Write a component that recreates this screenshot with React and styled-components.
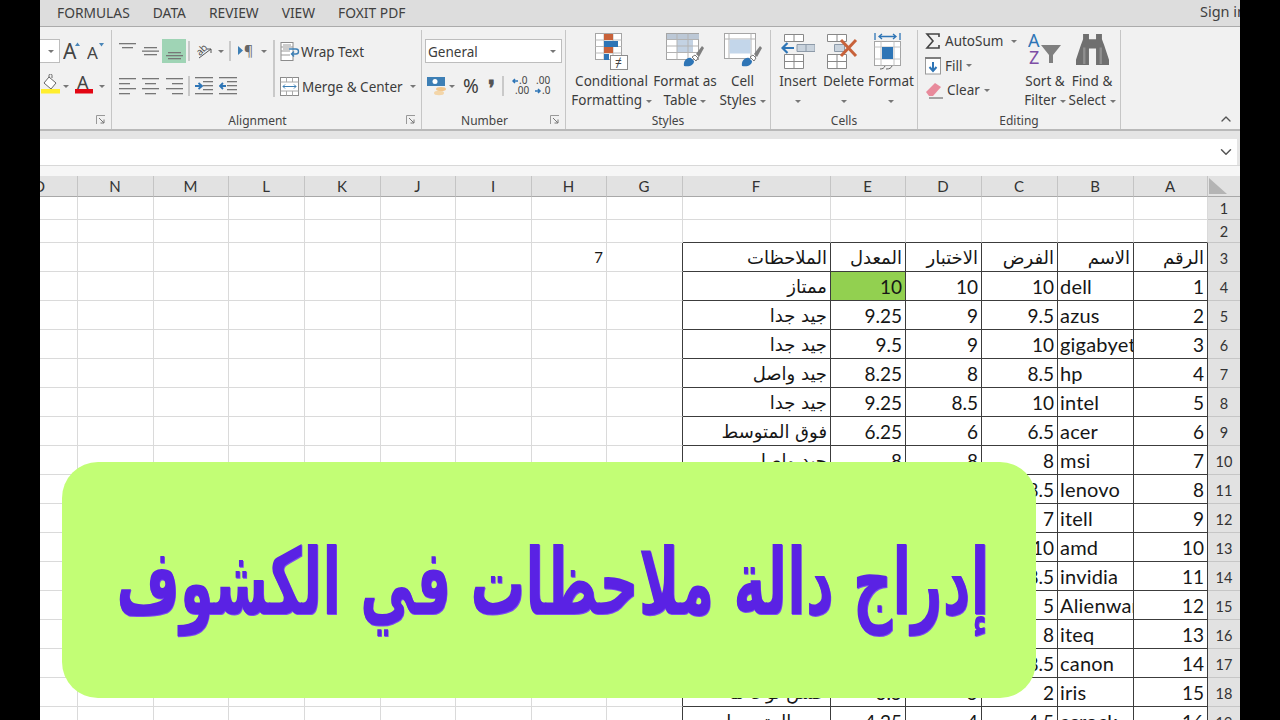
import React from "react";
import styled, { createGlobalStyle } from "styled-components";
import { ChevronUp, ChevronDown } from "lucide-react";

const Global = createGlobalStyle`
  html, body { margin: 0; padding: 0; background: #000; width: 1280px; height: 720px; overflow: hidden; }
  * { box-sizing: border-box; }
`;

const Frame = styled.div`
  width: 1280px; height: 720px; background: #000; padding: 0 40px;
  font-family: "Noto Sans", "Open Sans", sans-serif; color: #3c3c3c;
`;
const Main = styled.div`
  position: relative; width: 1200px; height: 720px; overflow: hidden; background: #f3f3f3;
  display: flex; flex-direction: column;
`;
const TabBar = styled.div`
  height: 27px; flex: none; background: #dddddd; border-bottom: 1px solid #ababab;
  display: flex; align-items: center; padding: 0 0 2px 17px; gap: 23px; font-size: 13.8px; color: #404040;
`;
const Tab = styled.span`white-space: nowrap;`;
const SignIn = styled.span`margin-left: auto; margin-right: -6px; font-size: 14.5px; white-space: nowrap; position: relative; top: -1px;`;

const Ribbon = styled.div`
  height: 104px; flex: none; background: #f1f1f1; border-bottom: 2px solid #b9b9b9; display: flex;
`;
const Group = styled.div`
  position: relative; width: ${p => p.$w}px; flex: none; display: flex; flex-direction: column;
  margin-top: 3px; border-right: 1.5px solid #c6c6c6;
`;
const GroupBody = styled.div`
  flex: 1; display: flex; padding-left: ${p => p.$pl || 0}px; min-height: 0;
`;
const GroupLabel = styled.div`
  height: 16px; flex: none; text-align: center; font-size: 12px; line-height: 16px; color: #444;
  padding-right: ${p => p.$shift || 0}px;
`;
const Launcher = styled.svg`position: absolute; right: 5px; bottom: 4px;`;
const CollapseSpace = styled.div`
  flex: 1; display: flex; justify-content: flex-end; align-items: flex-end; padding: 0 6px 2px 0; color: #555;
`;
const Stack = styled.div`display: flex; flex-direction: column; gap: 11px; padding-top: 9px;`;
const Row = styled.div`display: flex; align-items: center; height: 24px;`;
const Slot = styled.div`
  width: ${p => p.$w}px; height: 24px; flex: none; display: flex; align-items: center; justify-content: center;
  background: ${p => (p.$on ? "#9fd4b5" : "transparent")};
`;
const Tiny = styled.div`width: 1.5px; height: 20px; background: #c9c9c9;`;
const TallSep = styled.div`width: 2px; height: 57px; background: #c9c9c9; margin: 10px 5px 0 3px; flex: none;`;
const Caret = styled.span`
  display: inline-block; width: 0; height: 0; border-left: 3px solid transparent; border-right: 3px solid transparent;
  border-top: 3px solid #777; margin-left: ${p => p.$ml || 0}px; vertical-align: middle; flex: none;
`;
const Label = styled.span`font-size: 13.5px; white-space: nowrap; margin-left: ${p => p.$ml || 0}px; color: #3c3c3c; padding-top: 1px;`;
const SelectBox = styled.div`
  width: ${p => p.$w}px; height: 24px; background: #fff; border: 1px solid #bdbdbd; display: flex; align-items: center;
  justify-content: space-between; padding: 1px 5px 0 2px; font-size: 13.5px; flex: none;
`;
const FontBox = styled(SelectBox)`border-left: 0; justify-content: flex-end; padding-top: 0;`;
const Big = styled.div`
  width: ${p => p.$w}px; flex: none; display: flex; flex-direction: column; align-items: center; padding-top: 3px;
  font-size: 13.5px; line-height: 19px; white-space: nowrap; color: #3c3c3c;
`;
const BigIcon = styled.div`height: 39px; flex: none; display: flex; align-items: flex-start; justify-content: center;`;
const EditCol = styled.div`width: 104px; flex: none; padding: 0 0 0 7px; margin-top: -1px; display: flex; flex-direction: column;`;
const EditRow = styled.div`height: 24.5px; display: flex; align-items: center; gap: 4px; font-size: 13.5px;`;
const Percent = styled.span`font-size: 19px; color: #3c3c3c;`;
const Comma = styled.span`font-size: 22px; font-weight: 700; color: #555; font-family: "Liberation Serif", serif; position: relative; top: 3px;`;

const FormulaArea = styled.div`
  height: 45px; flex: none; background: #f6f6f6; display: flex; flex-direction: column;
`;
const FormulaBand = styled.div`
  height: 35px; flex: none; background: #e5e5e5; padding-top: 8px; padding-bottom: 1px; border-bottom: 1px solid #d8d8d8;
`;
const FormulaInput = styled.div`
  height: 26px; background: #fff; margin-right: 3px; display: flex; align-items: center; justify-content: flex-end;
  padding-right: 2px; color: #555;
`;

const Sheet = styled.div`
  flex: none; margin-left: -38px; display: grid;
  grid-template-columns: 76px 76px 75px 76px 76px 75px 76px 75px 76px 148px 75px 76px 76px 76px 74px 33px;
  grid-template-rows: 21px 23px 23px repeat(17, 29px);
  font-family: Lato, "Open Sans", "DejaVu Sans", sans-serif; color: #1f1f1f; background: #fff;
`;
const ColHead = styled.div`
  background: #e2e2e2; border-right: 1px solid #c4c4c4; border-bottom: 1.5px solid #a8a8a8; padding-right: 1px;
  display: flex; align-items: center; justify-content: center; font-size: 15px; color: #333;
`;
const Corner = styled.div`
  background: #e2e2e2; border-bottom: 1.5px solid #a8a8a8; position: relative;
  &::after { content: ""; position: absolute; left: 1px; top: 2px; width: 18px; height: 16px; background: #b4b4b4; clip-path: polygon(0 0, 100% 100%, 0 100%); }
`;
const RowHead = styled.div`
  background: #e2e2e2; border-bottom: 1px solid #c6c6c6; display: flex; align-items: center; justify-content: center;
  font-size: 14.5px; color: #333; padding: ${p => (p.$small ? 0 : 3)}px 1px 0 0;
`;
const Cell = styled.div`
  background: ${p => p.$fill || "#fff"};
  border-right: ${p => (p.$edgeR ? "1.5px solid #3c3c3c" : "1px solid #dadada")};
  border-bottom: ${p => (p.$edgeB ? "1.5px solid #3c3c3c" : "1px solid #dadada")};
  display: flex; align-items: center; overflow: hidden; white-space: nowrap;
  justify-content: ${p => (p.$left ? "flex-start" : "flex-end")};
  padding: ${p => (p.$ar ? "1px" : "0")} 3px 0 ${p => (p.$left ? 2 : 3)}px; color: #161616;
  font-size: ${p => (p.$ar ? 18 : p.$small ? 15 : p.$left ? 20 : 19)}px;
  letter-spacing: ${p => (p.$left ? 0.2 : 0)}px;
  font-family: ${p => (p.$ar ? '"DejaVu Sans", sans-serif' : 'Lato, "Open Sans", sans-serif')};
`;

const Banner = styled.div`
  position: absolute; left: 22px; top: 462px; width: 974px; height: 236px; border-radius: 36px; background: #c2fe75;
  display: flex; align-items: center; justify-content: center; padding: 4px 0 0 8px; overflow: hidden;
`;
const BannerText = styled.div`
  direction: rtl; font-family: "DejaVu Sans", sans-serif; font-weight: 700; font-size: 92px; color: #5a22e4;
  white-space: nowrap; text-shadow: 1px 1px 0 #7b4cf0; transform: scaleX(0.595); flex: none;
`;

/* ---------- icons ---------- */
const Lines = ({ rows, w = 17, h = 17 }) => (
  <svg width={w} height={h} viewBox={`0 0 ${w} ${h}`}>
    {rows.map(([y, a, b], i) => <rect key={i} x={a} y={y} width={b - a} height={1.3} fill="#777" />)}
  </svg>
);
const Launch = () => (
  <Launcher width="10" height="10" viewBox="0 0 10 10">
    <path d="M.5 9V.5H9" fill="none" stroke="#999" />
    <path d="M3 3l5 5M8 4.500V8H4.500" fill="none" stroke="#777" />
  </Launcher>
);
const GrowA = ({ size, up }) => (
  <svg width="18" height="20" viewBox="0 0 18 20">
    <text x="0" y="18" fontSize={size} fontFamily="Noto Sans" fill="#444">A</text>
    <path d={up ? "M12 5l2.500-3.500L17 5z" : "M12 2l2.500 3.500L17 2z"} fill="#4a86b8" />
  </svg>
);
const Bucket = () => (
  <svg width="20" height="24" viewBox="0 0 20 24">
    <path d="M8 3l7 6-5 6-7-6z" fill="#fff" stroke="#666" />
    <path d="M8 3V1.500a1.500 1.500 0 0 1 3 0V4" fill="none" stroke="#666" />
    <rect x="0" y="15" width="19" height="4.500" fill="#ffee2e" />
  </svg>
);
const ColorA = () => (
  <svg width="20" height="24" viewBox="0 0 20 24">
    <text x="3" y="15" fontSize="18" fontFamily="Noto Sans" fill="#444">A</text>
    <rect x="1" y="15" width="18" height="4.500" fill="#e30613" />
  </svg>
);
const Orient = () => (
  <svg width="18" height="18" viewBox="0 0 18 18">
    <text x="1" y="11" fontSize="10" fontFamily="Noto Sans" fill="#555" transform="rotate(-45 7 8)">ab</text>
    <path d="M4 16L16 7M12 7h4v4" fill="none" stroke="#555" />
  </svg>
);
const Rtl = () => (
  <svg width="18" height="14" viewBox="0 0 18 14">
    <path d="M1 2l5 4.500L1 11z" fill="#3d7fb5" />
    <text x="7" y="12" fontSize="14" fontFamily="Noto Sans" fill="#666">¶</text>
  </svg>
);
const Indent = ({ out }) => (
  <svg width="18" height="18" viewBox="0 0 18 18">
    {[1, 5, 9, 13, 17].map(y => <rect key={y} x={y === 1 || y === 17 ? 0 : 8} y={y - 1} width={y === 1 || y === 17 ? 18 : 10} height="1.3" fill="#777" />)}
    <path d={out ? "M7 9H1M4 6L1 9l3 3" : "M0 9h6M3.500 6L7 9l-3.500 3"} fill="none" stroke="#2e75b6" strokeWidth="1.800" />
  </svg>
);
const Wrap = () => (
  <svg width="20" height="19" viewBox="0 0 20 19">
    <rect x="1" y=".5" width="12" height="18" fill="#fff" stroke="#8c8c8c" />
    <path d="M1 5h12M1 9h9M1 13h9M3 3h8M3 7h6" stroke="#999" />
    <path d="M9 7h7a2 2 0 0 1 0 5h-4M14 9.500L11.500 12l2.500 2.500" fill="none" stroke="#3d7fb5" strokeWidth="1.400" />
  </svg>
);
const Merge = () => (
  <svg width="19" height="19" viewBox="0 0 19 19">
    <rect x=".5" y=".5" width="18" height="18" fill="#fff" stroke="#8c8c8c" />
    <path d="M.5 5h18M.5 14h18M6.500.5V5M12.500.5V5M6.500 14v4.500M12.500 14v4.500" stroke="#aaa" />
    <path d="M3 9.500h13M5 7.500l-2 2 2 2M14 7.500l2 2-2 2" fill="none" stroke="#3d7fb5" />
  </svg>
);
const Money = () => (
  <svg width="20" height="20" viewBox="0 0 20 20">
    <rect x="0" y="1" width="18" height="9" fill="#3d7fb5" />
    <circle cx="8" cy="5.500" r="2.500" fill="#fff" />
    <ellipse cx="14" cy="13" rx="5" ry="2" fill="#f1c68c" />
    <ellipse cx="12" cy="17" rx="5" ry="2.200" fill="#f3d5a8" />
  </svg>
);
const Dec = ({ more }) => (
  <svg width="20" height="20" viewBox="0 0 20 20" fontFamily="Noto Sans" fontSize="10" fill="#444">
    {more ? (
      <>
        <text x="7" y="8">.0</text><text x="3" y="18">.00</text>
        <path d="M6 5H1M3 3L1 5l2 2" fill="none" stroke="#2e75b6" strokeWidth="1.500" />
      </>
    ) : (
      <>
        <text x="3" y="8">.00</text><text x="9" y="18">.0</text>
        <path d="M2 15h5M5 13l2 2-2 2" fill="none" stroke="#2e75b6" strokeWidth="1.500" />
      </>
    )}
  </svg>
);
const Conditional = () => (
  <svg width="34" height="38" viewBox="0 0 34 38">
    <rect x=".5" y=".5" width="26" height="26" fill="#fff" stroke="#a5a5a5" />
    <path d="M.5 7h26M.5 13.500h26M.5 20h26M9 .5v26M18 .5v26" stroke="#bbb" />
    <rect x="9" y="1" width="9" height="6" fill="#c8623a" />
    <rect x="9" y="8" width="14" height="6" fill="#2e75b6" />
    <rect x="9" y="14" width="9" height="6" fill="#c8623a" />
    <rect x="9" y="21" width="5" height="6" fill="#2e75b6" />
    <rect x="15.500" y="22.500" width="17" height="14" fill="#fff" stroke="#8c8c8c" />
    <text x="20" y="34" fontSize="12" fontFamily="Noto Sans" fill="#444">≠</text>
  </svg>
);
const Brush = () => (
  <g>
    <path d="M18 33c-1-5 3-9 7-8l3 3c0 4-4 6-10 5z" fill="#2e75b6" />
    <path d="M26 24l3-2 3 3-2 3z" fill="#fff" stroke="#777" />
    <path d="M30 21l6-8 2 2-5 9z" fill="#7f7f7f" />
  </g>
);
const FormatTable = () => (
  <svg width="38" height="36" viewBox="0 0 38 36">
    <rect x=".5" y=".5" width="32" height="26" fill="#fff" stroke="#a5a5a5" />
    <rect x="1" y="1" width="32" height="5" fill="#bcc8d6" />
    <rect x="11" y="6" width="16" height="13" fill="#c3d2e3" />
    <path d="M.5 6.500h32M.5 13h32M.5 19.500h32M11 .5v26M22 .5v26" stroke="#b3b3b3" />
    <Brush />
  </svg>
);
const CellStyles = () => (
  <svg width="38" height="36" viewBox="0 0 38 36">
    <rect x=".5" y=".5" width="31" height="25" fill="#fff" stroke="#a5a5a5" />
    <path d="M.5 6h31M5 .5v25M27 .5v25" stroke="#b3b3b3" />
    <rect x="5.500" y="6.500" width="21" height="14" fill="#c3d6ea" />
    <Brush />
  </svg>
);
const Insert = () => (
  <svg width="34" height="36" viewBox="0 0 34 36">
    <path d="M3.500 1.500h19v7h-19zM13 1.500v7" fill="#fff" stroke="#888" />
    <path d="M3.500 22.500h19v14h-19zM3.500 29.500h19M13 22.500v14" fill="#fff" stroke="#888" transform="translate(0 -1)" />
    <path d="M16 11.500h18v7H16zM25 11.500v7" fill="#c9d3dd" stroke="#8d9aa8" />
    <path d="M13 15H2M6.500 10L1.500 15l5 5" fill="none" stroke="#2e75b6" strokeWidth="2.200" />
  </svg>
);
const DeleteIcon = () => (
  <svg width="36" height="36" viewBox="0 0 36 36">
    <path d="M1.500 1.500h19v7h-19zM11 1.500v7" fill="#fff" stroke="#888" />
    <path d="M1.500 21.500h19v14h-19zM1.500 28.500h19M11 21.500v14" fill="#fff" stroke="#888" />
    <path d="M8.500 11.500h10v7h-10z" fill="#c9d3dd" stroke="#8d9aa8" />
    <path d="M15 7l15 16M30 7L15 23" stroke="#c8623a" strokeWidth="3" />
  </svg>
);
const FormatIcon = () => (
  <svg width="34" height="38" viewBox="0 0 34 38">
    <path d="M1 0v7M26 0v7M5 3.500h17M8 1L5 3.500 8 6M19 1l3 2.500L19 6" fill="none" stroke="#2e75b6" strokeWidth="1.300" />
    <rect x=".5" y="8.500" width="26" height="24" fill="#fff" stroke="#a5a5a5" />
    <path d="M.5 14h26M.5 26h26M7 8.500v24M20 8.500v24" stroke="#c2c2c2" />
    <rect x="8" y="14" width="11" height="12" fill="#2e75b6" />
    <path d="M6 36c3 0 4-1 5-3M12 36c4 0 5-1 6-3" fill="none" stroke="#666" />
  </svg>
);
const Sigma = () => (
  <svg width="16" height="16" viewBox="0 0 16 16">
    <path d="M14 4V1H2l6 7-6 7h12v-3" fill="none" stroke="#444" strokeWidth="1.600" />
  </svg>
);
const FillIcon = () => (
  <svg width="16" height="18" viewBox="0 0 16 18">
    <rect x=".5" y="1" width="15" height="16" fill="#fff" stroke="#9a9a9a" />
    <rect x="0" y="0" width="16" height="2" fill="#7f7f7f" />
    <path d="M8 5v9M4.500 10L8 14l3.500-4" fill="none" stroke="#2e75b6" strokeWidth="2" />
  </svg>
);
const Eraser = () => (
  <svg width="18" height="17" viewBox="0 0 18 17">
    <path d="M1 10l9-9 6 4-8 9H4z" fill="#e88a9b" />
    <path d="M4 16h14" stroke="#555" />
  </svg>
);
const SortIcon = () => (
  <svg width="34" height="34" viewBox="0 0 34 34">
    <text x="0" y="14" fontSize="18" fontFamily="Noto Sans" fill="#2e75b6">A</text>
    <text x="1" y="31" fontSize="18" fontFamily="Noto Sans" fill="#7d4ea5">Z</text>
    <path d="M13 12h20l-8 10v8h-4v-8z" fill="#7f7f7f" />
  </svg>
);
const Binoculars = () => (
  <svg width="33" height="33" viewBox="0 0 28 32" preserveAspectRatio="none">
    <path d="M6 1h5v5h6V1h5v5l2 6 4 14v5H17V15h-6v16H0v-5l4-14 2-6z" fill="#6f6f6f" />
    <path d="M7 14v16M21 14v16" stroke="#8f8f8f" strokeWidth="2" />
  </svg>
);

/* ---------- sheet data ---------- */
const colNames = ["O", "N", "M", "L", "K", "J", "I", "H", "G", "F", "E", "D", "C", "B", "A"];
const FIRST = 9; // index of column F
const rows = [
  ["الملاحظات", "المعدل", "الاختبار", "الفرض", "الاسم", "الرقم"],
  ["ممتاز", "10", "10", "10", "dell", "1"],
  ["جيد جدا", "9.25", "9", "9.5", "azus", "2"],
  ["جيد جدا", "9.5", "9", "10", "gigabyet", "3"],
  ["جيد واصل", "8.25", "8", "8.5", "hp", "4"],
  ["جيد جدا", "9.25", "8.5", "10", "intel", "5"],
  ["فوق المتوسط", "6.25", "6", "6.5", "acer", "6"],
  ["جيد واصل", "8", "8", "8", "msi", "7"],
  ["", "", "", "8.5", "lenovo", "8"],
  ["", "", "", "7", "itell", "9"],
  ["", "", "", "10", "amd", "10"],
  ["", "", "", "8.5", "invidia", "11"],
  ["", "", "", "5", "Alienware", "12"],
  ["", "", "", "8", "iteq", "13"],
  ["", "", "", "8.5", "canon", "14"],
  ["حسن نوعا ما", "3.5", "5", "2", "iris", "15"],
  ["دون المتوسط", "4.25", "4", "4.5", "asrock", "16"],
];

const SheetGrid = () => {
  const cells = [];
  colNames.forEach(c => cells.push(<ColHead key={c}>{c}</ColHead>));
  cells.push(<Corner key="corner" />);
  for (let r = 1; r <= 19; r++) {
    colNames.forEach((c, i) => {
      const data = r >= 3 && i >= FIRST ? rows[r - 3][i - FIRST] : "";
      const inTable = i >= FIRST;
      const arabic = /[\u0600-\u06ff]/.test(data);
      const isSeven = r === 3 && c === "H";
      cells.push(
        <Cell
          key={c + r}
          $ar={arabic}
          $small={isSeven}
          $left={c === "B" && r > 3}
          $fill={c === "E" && r === 4 ? "#92d050" : undefined}
          $edgeR={r >= 3 && (inTable || c === "G")}
          $edgeB={inTable && r >= 2}
        >
          {isSeven ? "7" : data}
        </Cell>
      );
    });
    cells.push(<RowHead key={"r" + r} $small={r < 3}>{r}</RowHead>);
  }
  return <Sheet>{cells}</Sheet>;
};

export default function App() {
  return (
    <Frame>
      <Global />
      <Main>
        <TabBar>
          <Tab>FORMULAS</Tab><Tab>DATA</Tab><Tab>REVIEW</Tab><Tab>VIEW</Tab><Tab>FOXIT PDF</Tab>
          <SignIn>Sign in</SignIn>
        </TabBar>
        <Ribbon>
          <Group $w={72}>
            <GroupBody>
              <Stack>
                <Row>
                  <FontBox $w={20}><Caret /></FontBox>
                  <Slot $w={24}><GrowA size={21} up /></Slot>
                  <Slot $w={24}><GrowA size={17} /></Slot>
                </Row>
                <Row>
                  <Slot $w={21}><Bucket /></Slot><Caret $ml={2} />
                  <Slot $w={30}><ColorA /></Slot><Caret />
                </Row>
              </Stack>
            </GroupBody>
            <GroupLabel>&nbsp;</GroupLabel>
            <Launch />
          </Group>

          <Group $w={310}>
            <GroupBody $pl={4}>
              <Stack>
                <Row>
                  <Slot $w={23}><Lines rows={[[0, 0, 17], [4, 3, 14]]} /></Slot>
                  <Slot $w={23}><Lines rows={[[4, 2, 15], [7.500, 0, 17], [11, 2, 15]]} /></Slot>
                  <Slot $on $w={24}><Lines rows={[[9, 2, 15], [12, 0, 17], [15, 2, 15]]} /></Slot>
                  <Slot $w={6}><Tiny /></Slot>
                  <Slot $w={24}><Orient /></Slot>
                  <Slot $w={10}><Caret /></Slot>
                  <Slot $w={8}><Tiny /></Slot>
                  <Slot $w={24}><Rtl /></Slot>
                  <Slot $w={12}><Caret /></Slot>
                </Row>
                <Row>
                  <Slot $w={23}><Lines h={18} rows={[[1, 0, 17], [6, 0, 11], [11, 0, 17], [16, 0, 11]]} /></Slot>
                  <Slot $w={23}><Lines h={18} rows={[[1, 0, 17], [6, 3, 14], [11, 0, 17], [16, 3, 14]]} /></Slot>
                  <Slot $w={24}><Lines h={18} rows={[[1, 0, 17], [6, 6, 17], [11, 0, 17], [16, 6, 17]]} /></Slot>
                  <Slot $w={6}><Tiny /></Slot>
                  <Slot $w={24}><Indent /></Slot>
                  <Slot $w={24}><Indent out /></Slot>
                </Row>
              </Stack>
              <TallSep />
              <Stack>
                <Row><Wrap /><Label $ml={1}>Wrap Text</Label></Row>
                <Row><Merge /><Label $ml={3}>Merge &amp; Center</Label><Caret $ml={7} /></Row>
              </Stack>
            </GroupBody>
            <GroupLabel $shift={18}>Alignment</GroupLabel>
            <Launch />
          </Group>

          <Group $w={144}>
            <GroupBody $pl={3}>
              <Stack>
                <SelectBox $w={137}>General<Caret /></SelectBox>
                <Row>
                  <Slot $w={23}><Money /></Slot>
                  <Caret $ml={1} />
                  <Slot $w={32}><Percent>%</Percent></Slot>
                  <Slot $w={8}><Comma>❜</Comma></Slot>
                  <Slot $w={16}><Tiny /></Slot>
                  <Slot $w={22}><Dec more /></Slot>
                  <Slot $w={20}><Dec /></Slot>
                </Row>
              </Stack>
            </GroupBody>
            <GroupLabel $shift={18}>Number</GroupLabel>
            <Launch />
          </Group>

          <Group $w={205}>
            <GroupBody $pl={4}>
              <Big $w={83}><BigIcon><Conditional /></BigIcon>Conditional<span>Formatting <Caret /></span></Big>
              <Big $w={64}><BigIcon><FormatTable /></BigIcon>Format as<span>Table <Caret /></span></Big>
              <Big $w={51}><BigIcon><CellStyles /></BigIcon>Cell<span>Styles <Caret /></span></Big>
            </GroupBody>
            <GroupLabel>Styles</GroupLabel>
          </Group>

          <Group $w={147}>
            <GroupBody $pl={4}>
              <Big $w={46}><BigIcon><Insert /></BigIcon>Insert<span><Caret /></span></Big>
              <Big $w={45}><BigIcon><DeleteIcon /></BigIcon>Delete<span><Caret /></span></Big>
              <Big $w={50}><BigIcon><FormatIcon /></BigIcon>Format<span><Caret /></span></Big>
            </GroupBody>
            <GroupLabel>Cells</GroupLabel>
          </Group>

          <Group $w={203}>
            <GroupBody>
              <EditCol>
                <EditRow><Sigma />AutoSum<Caret $ml={4} /></EditRow>
                <EditRow><FillIcon />Fill<Caret /></EditRow>
                <EditRow><Eraser />Clear<Caret /></EditRow>
              </EditCol>
              <Big $w={46}><BigIcon><SortIcon /></BigIcon>Sort &amp;<span>Filter <Caret /></span></Big>
              <Big $w={48}><BigIcon><Binoculars /></BigIcon>Find &amp;<span>Select <Caret /></span></Big>
            </GroupBody>
            <GroupLabel>Editing</GroupLabel>
          </Group>

          <CollapseSpace><ChevronUp size={16} strokeWidth={2} /></CollapseSpace>
        </Ribbon>

        <FormulaArea>
          <FormulaBand>
            <FormulaInput><ChevronDown size={18} strokeWidth={2} /></FormulaInput>
          </FormulaBand>
        </FormulaArea>

        <SheetGrid />

        <Banner>
          <BannerText>إدراج دالة ملاحظات في الكشوف</BannerText>
        </Banner>
      </Main>
    </Frame>
  );
}
